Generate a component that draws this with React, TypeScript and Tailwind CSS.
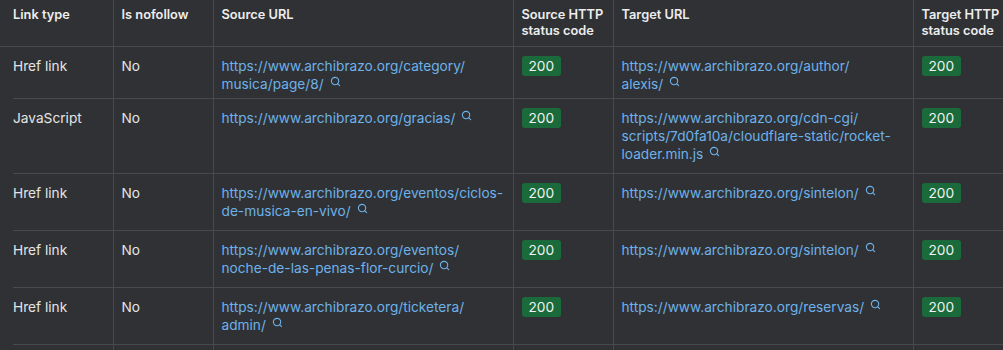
import { Search } from "lucide-react";

type Row = {
  type: string;
  nofollow: string;
  source: string;
  sourceCode: number;
  target: string;
  targetCode: number;
};

const rows: Row[] = [
  {
    type: "Href link",
    nofollow: "No",
    source: "https://www.archibrazo.org/category/musica/page/8/",
    sourceCode: 200,
    target: "https://www.archibrazo.org/author/alexis/",
    targetCode: 200,
  },
  {
    type: "JavaScript",
    nofollow: "No",
    source: "https://www.archibrazo.org/gracias/",
    sourceCode: 200,
    target:
      "https://www.archibrazo.org/cdn-cgi/scripts/7d0fa10a/cloudflare-static/rocket-loader.min.js",
    targetCode: 200,
  },
  {
    type: "Href link",
    nofollow: "No",
    source: "https://www.archibrazo.org/eventos/ciclos-de-musica-en-vivo/",
    sourceCode: 200,
    target: "https://www.archibrazo.org/sintelon/",
    targetCode: 200,
  },
  {
    type: "Href link",
    nofollow: "No",
    source: "https://www.archibrazo.org/eventos/noche-de-las-penas-flor-curcio/",
    sourceCode: 200,
    target: "https://www.archibrazo.org/sintelon/",
    targetCode: 200,
  },
  {
    type: "Href link",
    nofollow: "No",
    source: "https://www.archibrazo.org/ticketera/admin/",
    sourceCode: 200,
    target: "https://www.archibrazo.org/reservas/",
    targetCode: 200,
  },
  {
    type: "Href link",
    nofollow: "No",
    source: "https://www.archibrazo.org/contacto/",
    sourceCode: 200,
    target: "https://www.archibrazo.org/",
    targetCode: 200,
  },
];

// allow a break after every "/", keep the last word glued to the icon
function UrlCell({ url }: { url: string }) {
  const body = url.slice(0, -1);
  const cut = Math.max(body.lastIndexOf("/"), body.lastIndexOf("-")) + 1;
  const head = url.slice(0, cut).split(/(?<=\/)/);
  const tail = url.slice(cut);
  return (
    <a href="#" className="text-[#6db2ea]">
      {head.map((p, i) => (
        <span key={i}>
          {p}
          <wbr />
        </span>
      ))}
      <span className="whitespace-nowrap">
        {tail}
        <Search
          size={11}
          strokeWidth={2.4}
          className="inline-block ml-[6px] align-[2px]"
        />
      </span>
    </a>
  );
}

function Badge({ code }: { code: number }) {
  return (
    <span className="inline-block rounded-[3px] bg-[#1b6a3b] px-[7px] leading-[20px] text-[#eef3ef]">
      {code}
    </span>
  );
}

const line = "border-b border-r border-[#48494c]";
const th = `align-top text-left font-semibold text-[12.8px] leading-4 text-[#ededed] pt-[7px] pb-[7px] pr-2 ${line}`;
const td = `align-top pr-[9px] pt-[10px] ${line}`;

function App() {
  return (
    <div
      className="w-[1003px] h-[350px] overflow-hidden bg-[#303134] text-[#e4e4e4] text-[13.7px]"
      style={{ fontFamily: "Inter, 'Liberation Sans', sans-serif" }}
    >
      <table className="table-fixed border-collapse w-[1013px]">
        <colgroup>
          <col className="w-[13px]" />
          <col className="w-[100px]" />
          <col className="w-[100px]" />
          <col className="w-[300px]" />
          <col className="w-[100px]" />
          <col className="w-[300px]" />
          <col className="w-[100px]" />
        </colgroup>
        <thead>
          <tr>
            <th className="p-0 border-b border-[#48494c]"></th>
            <th className={`${th} pl-0`}>Link type</th>
            <th className={`${th} pl-2`}>Is nofollow</th>
            <th className={`${th} pl-2`}>Source URL</th>
            <th className={`${th} pl-2`}>Source HTTP status code</th>
            <th className={`${th} pl-2`}>Target URL</th>
            <th className={`${th} pl-2`}>Target HTTP status code</th>
          </tr>
        </thead>
        <tbody className="leading-[18px]">
          {rows.map((r, i) => {
            const pb = i === 0 ? "pb-[5px]" : "pb-[10px]";
            return (
              <tr key={i}>
                <td className="p-0"></td>
                <td className={`${td} ${pb} pl-0`}>{r.type}</td>
                <td className={`${td} ${pb} pl-2`}>{r.nofollow}</td>
                <td className={`${td} ${pb} pl-2`}>
                  <UrlCell url={r.source} />
                </td>
                <td className={`align-top pl-2 pt-[9px] ${pb} ${line}`}>
                  <Badge code={r.sourceCode} />
                </td>
                <td className={`${td} ${pb} pl-2`}>
                  <UrlCell url={r.target} />
                </td>
                <td className={`align-top pl-2 pt-[9px] ${pb} ${line}`}>
                  <Badge code={r.targetCode} />
                </td>
              </tr>
            );
          })}
        </tbody>
      </table>
    </div>
  );
}

export default App;
